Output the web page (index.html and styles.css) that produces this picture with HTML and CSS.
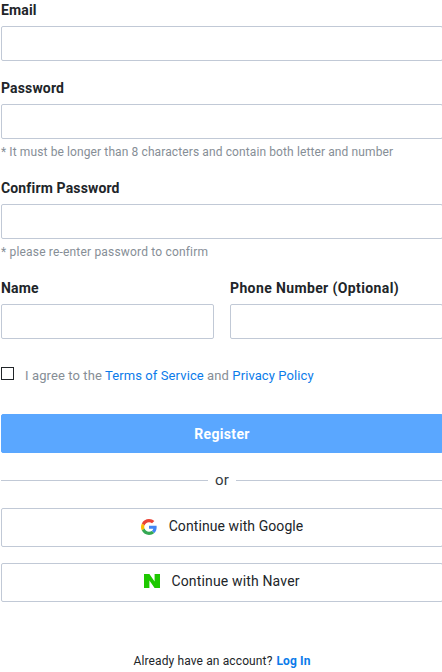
FILE: index.html
```
<!DOCTYPE html>
<html lang="en">
<head>
<meta charset="utf-8">
<title>Register</title>
<link rel="stylesheet" href="styles.css">
</head>
<body>
<form class="form">
  <div class="field">
    <label class="label" for="email">Email</label>
    <input class="input" id="email" type="email">
  </div>
  <div class="field">
    <label class="label" for="password">Password</label>
    <input class="input" id="password" type="password">
    <p class="hint">* It must be longer than 8 characters and contain both letter and number</p>
  </div>
  <div class="field">
    <label class="label" for="confirm">Confirm Password</label>
    <input class="input" id="confirm" type="password">
    <p class="hint hint-confirm">* please re-enter password to confirm</p>
  </div>
  <div class="row">
    <div class="field">
      <label class="label" for="name">Name</label>
      <input class="input" id="name" type="text">
    </div>
    <div class="field">
      <label class="label label-phone" for="phone">Phone Number (Optional)</label>
      <input class="input" id="phone" type="tel">
    </div>
  </div>
  <div class="agree">
    <input class="checkbox" id="agree" type="checkbox">
    <label class="agree-text" for="agree">I agree to the <a href="#">Terms of Service</a> and <a href="#">Privacy Policy</a></label>
  </div>
  <button class="button primary" type="button"><span>Register</span></button>
  <div class="divider"><span>or</span></div>
  <button class="button social google" type="button">
    <svg width="16" height="16" viewBox="0 0 48 48"><path fill="#EA4335" d="M24 9.5c3.54 0 6.71 1.22 9.21 3.6l6.85-6.85C35.9 2.38 30.47 0 24 0 14.62 0 6.51 5.38 2.56 13.22l7.98 6.19C12.43 13.72 17.74 9.5 24 9.5z"/><path fill="#4285F4" d="M46.98 24.55c0-1.57-.15-3.09-.38-4.55H24v9.02h12.94c-.58 2.96-2.26 5.48-4.78 7.18l7.73 6c4.51-4.18 7.09-10.36 7.09-17.65z"/><path fill="#FBBC05" d="M10.53 28.59c-.48-1.45-.76-2.99-.76-4.59s.27-3.14.76-4.59l-7.98-6.19C.92 16.46 0 20.12 0 24s.92 7.54 2.56 10.78l7.97-6.19z"/><path fill="#34A853" d="M24 48c6.48 0 11.93-2.13 15.89-5.81l-7.73-6c-2.15 1.45-4.92 2.3-8.16 2.3-6.26 0-11.57-4.22-13.47-9.91l-7.98 6.19C6.51 42.62 14.62 48 24 48z"/></svg>
    <span>Continue with Google</span>
  </button>
  <button class="button social naver" type="button">
    <svg width="16" height="14" viewBox="0 0 16 14"><path fill="#1EC800" d="M0 0h5.4l5.2 7.4V0H16v14h-5.4L5.4 6.6V14H0z"/></svg>
    <span>Continue with Naver</span>
  </button>
  <p class="login"><span>Already have an account?</span> <a href="#">Log In</a></p>
</form>
</body>
</html>
```
FILE: styles.css
```
* { box-sizing: border-box; }
body {
  margin: 0;
  overflow: hidden;
  background: #fff;
  color: #212529;
  font-family: Roboto, "Liberation Sans", sans-serif;
  font-size: 14px;
}
a { color: #0b7bea; text-decoration: none; }
.form { width: 442px; margin-left: 1px; }
.field { margin-bottom: 17px; }
.label { display: block; height: 26px; line-height: 20px; font-weight: 700; letter-spacing: .15px; white-space: nowrap; }
.label-phone { letter-spacing: .38px; }
.input {
  display: block;
  width: 100%;
  height: 35px;
  margin: 0;
  padding: 0 10px;
  border: 1px solid #c1c9d6;
  border-radius: 2px;
  background: #fff;
  font: inherit;
}
.hint { height: 22px; margin: 0; padding-top: 4px; color: #868e96; font-size: 12px; line-height: 18px; letter-spacing: .11px; white-space: nowrap; }
.hint-confirm { letter-spacing: .18px; }
.row { display: grid; grid-template-columns: 1fr 1fr; gap: 16px; }
.row .field { margin-bottom: 0; }
.agree { display: flex; height: 20px; margin-top: 27px; }
.checkbox {
  appearance: none;
  flex: none;
  width: 13px;
  height: 13px;
  margin: 1px 11px 0 0;
  border: 1px solid #212529;
}
.agree-text { color: #868e96; font-size: 13px; line-height: 20px; white-space: nowrap; letter-spacing: .1px; }
.button {
  display: flex;
  align-items: center;
  justify-content: center;
  width: 100%;
  height: 39px;
  padding: 0;
  border: 1px solid #c1c9d6;
  border-radius: 2px;
  background: #fff;
  color: #212529;
  font: inherit;
  line-height: 20px;
}
.primary { margin-top: 28px; border-color: #5aa7ff; background: #5aa7ff; color: #fff; font-weight: 700; letter-spacing: .35px; }
.divider { display: flex; align-items: center; gap: 7px; height: 55px; color: #343a40; }
.divider span { padding-bottom: 2px; font-size: 15px; letter-spacing: .3px; }
.divider::before, .divider::after { content: ""; flex: 1; height: 1px; background: #c1c9d6; }
.social { gap: 12px; padding-bottom: 2px; letter-spacing: .08px; }
.social span { padding-bottom: 2px; }
.naver { gap: 11px; margin-top: 16px; letter-spacing: .16px; }
.naver svg { margin-bottom: 1px; }
.login { display: flex; justify-content: center; gap: 4px; margin: 50px 0 0; font-size: 12px; line-height: 18px; letter-spacing: .12px; }
.login a { font-weight: 700; }
```
